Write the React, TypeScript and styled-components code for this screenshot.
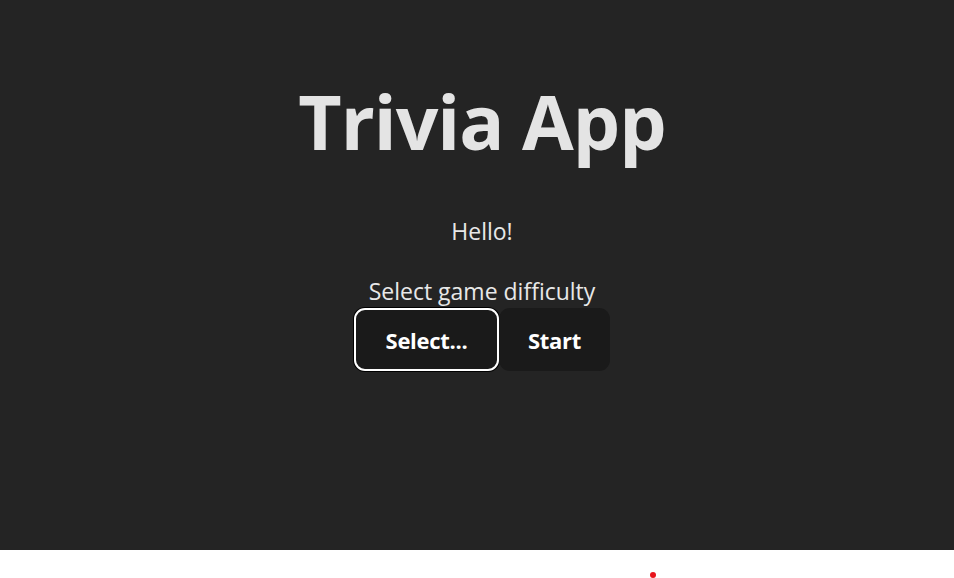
import React from "react";
import styled, { createGlobalStyle } from "styled-components";

const GlobalStyle = createGlobalStyle`
  html, body {
    margin: 0;
    padding: 0;
    background: #ffffff;
  }
  body {
    font-family: "Open Sans", "Noto Sans", "Liberation Sans", sans-serif;
  }
`;

const Stage = styled.main`
  height: 550px;
  background: #242424;
  color: rgba(255, 255, 255, 0.87);
  display: flex;
  flex-direction: column;
  align-items: center;
  box-sizing: border-box;
  padding: 73px 0 0 10px;
`;

const Title = styled.h1`
  margin: 0;
  font-size: 75px;
  line-height: 96px;
  font-weight: 700;
  letter-spacing: -1px;
  color: #e4e4e4;
`;

const Greeting = styled.p`
  margin: 47px 0 0;
  font-size: 23px;
  line-height: 30px;
  color: #e8e8e8;
`;

const Label = styled.p`
  margin: 30px 0 0;
  font-size: 23px;
  line-height: 30px;
  color: #e8e8e8;
`;

const Controls = styled.div`
  display: flex;
  align-items: center;
  margin-top: 2px;
`;

const Button = styled.button<{ $focused?: boolean }>`
  box-sizing: border-box;
  height: 63px;
  padding: 0 ${(p) => (p.$focused ? "29.5px" : "27px")};
  border-radius: 11px;
  border: 2px solid ${(p) => (p.$focused ? "#ffffff" : "transparent")};
  box-shadow: ${(p) => (p.$focused ? "0 0 0 1px #000" : "none")};
  background: #1a1a1a;
  color: #ffffff;
  font-family: inherit;
  font-size: 22px;
  font-weight: 700;
  letter-spacing: -0.3px;
  cursor: pointer;
`;

const Footer = styled.footer`
  height: 28px;
  background: #ffffff;
  box-sizing: border-box;
  padding: 22px 0 0 650px;
`;

const Dot = styled.span`
  display: block;
  width: 6px;
  height: 6px;
  border-radius: 50%;
  background: #e8141c;
`;

export default function App() {
  return (
    <>
      <GlobalStyle />
      <Stage>
        <Title>Trivia App</Title>
        <Greeting>Hello!</Greeting>
        <Label>Select game difficulty</Label>
        <Controls>
          <Button $focused>Select...</Button>
          <Button>Start</Button>
        </Controls>
      </Stage>
      <Footer>
        <Dot />
      </Footer>
    </>
  );
}
